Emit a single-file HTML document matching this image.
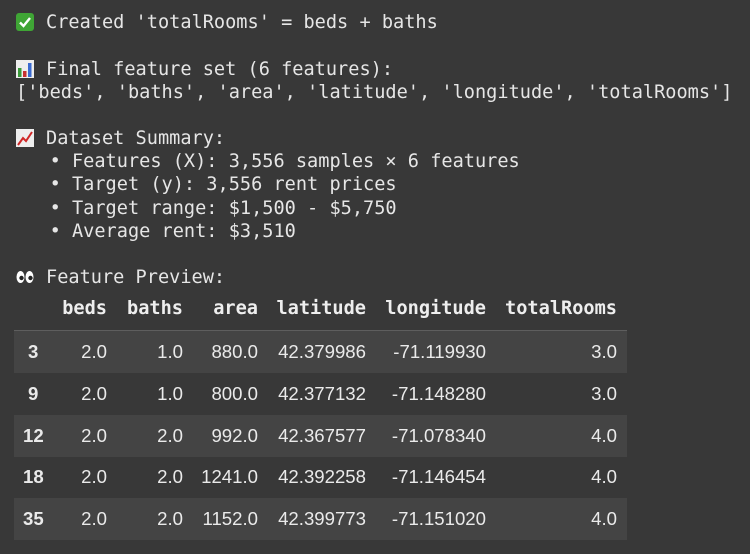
<!DOCTYPE html>
<html><head><style>
body{margin:0;width:750px;height:554px;background:#383838;overflow:hidden;position:relative;font-family:"DejaVu Sans Mono","Liberation Mono",monospace;color:#e6e6e6}
.l{position:absolute;left:16px;font-size:18.6px;white-space:pre;line-height:23px}
.ic{display:inline-block;width:18px;height:18px;vertical-align:-3px;margin-right:12px}
.row{position:absolute;left:14px;width:613px;height:42px}
.c{position:absolute;font-family:"Liberation Sans",Arial,sans-serif;font-size:18.6px;line-height:42px;text-align:right;color:#eaeaea}
.h{position:absolute;font-weight:bold;font-size:18.6px;line-height:42px;text-align:right;color:#eee}
.i{font-weight:bold;text-align:left}
</style></head><body>
<div class="l" style="top:11px"><span class="ic" style="background:#3fa535;border-radius:3px;position:relative"><svg width="18" height="18" viewBox="0 0 18 18" style="position:absolute;left:0;top:0"><path d="M4 9.5 L7.5 13 L14 5" stroke="#fff" stroke-width="2.4" fill="none"/></svg></span>Created 'totalRooms' = beds + baths</div>
<div class="l" style="top:58px"><span class="ic" style="background:#eee;position:relative"><svg width="18" height="18" style="position:absolute;left:0;top:0"><rect x="2" y="8" width="3.5" height="9" fill="#3a9a3a"/><rect x="7" y="11" width="3.5" height="6" fill="#c83030"/><rect x="12" y="3" width="3.5" height="14" fill="#3a6ad0"/></svg></span>Final feature set (6 features):</div>
<div class="l" style="top:81px">['beds', 'baths', 'area', 'latitude', 'longitude', 'totalRooms']</div>
<div class="l" style="top:127px"><span class="ic" style="background:#eee;position:relative"><svg width="18" height="18" style="position:absolute;left:0;top:0"><path d="M2 16 L7 9 L10 12 L16 3" stroke="#d02828" stroke-width="2" fill="none"/></svg></span>Dataset Summary:</div>
<div class="l" style="top:150px">   • Features (X): 3,556 samples × 6 features</div>
<div class="l" style="top:173px">   • Target (y): 3,556 rent prices</div>
<div class="l" style="top:197px">   • Target range: $1,500 - $5,750</div>
<div class="l" style="top:220px">   • Average rent: $3,510</div>
<div class="l" style="top:266px"><span class="ic" style="position:relative"><svg width="18" height="18" style="position:absolute;left:0;top:0"><ellipse cx="4.5" cy="9" rx="4" ry="6" fill="#fff"/><ellipse cx="13.5" cy="9" rx="4" ry="6" fill="#fff"/><circle cx="5.5" cy="10" r="2.2" fill="#222"/><circle cx="14.5" cy="10" r="2.2" fill="#222"/></svg></span>Feature Preview:</div>

<div style="position:absolute;left:14px;top:287px;width:613px;height:43px;border-bottom:1px solid #5e5e5e"></div>
<div class="h" style="top:288px;right:643px">beds</div>
<div class="h" style="top:288px;right:567px">baths</div>
<div class="h" style="top:288px;right:492px">area</div>
<div class="h" style="top:288px;right:384px">latitude</div>
<div class="h" style="top:288px;right:264px">longitude</div>
<div class="h" style="top:288px;right:133px">totalRooms</div>

<div class="row" style="top:331px;background:#444"></div>
<div class="row" style="top:415px;background:#444"></div>
<div class="row" style="top:498px;background:#444"></div>

<div id="t"></div>
<script>
var d=[["3","2.0","1.0","880.0","42.379986","-71.119930","3.0"],["9","2.0","1.0","800.0","42.377132","-71.148280","3.0"],["12","2.0","2.0","992.0","42.367577","-71.078340","4.0"],["18","2.0","2.0","1241.0","42.392258","-71.146454","4.0"],["35","2.0","2.0","1152.0","42.399773","-71.151020","4.0"]];
var r=[643,567,492,384,264,133],h="";
d.forEach(function(row,k){var t=331+k*41.8;
h+='<div class="c i" style="top:'+t+'px;left:'+(row[0].length>1?23:28)+'px">'+row[0]+'</div>';
for(var j=1;j<7;j++)h+='<div class="c" style="top:'+t+'px;right:'+r[j-1]+'px">'+row[j]+'</div>';});
document.getElementById('t').innerHTML=h;
</script>
</body></html>
